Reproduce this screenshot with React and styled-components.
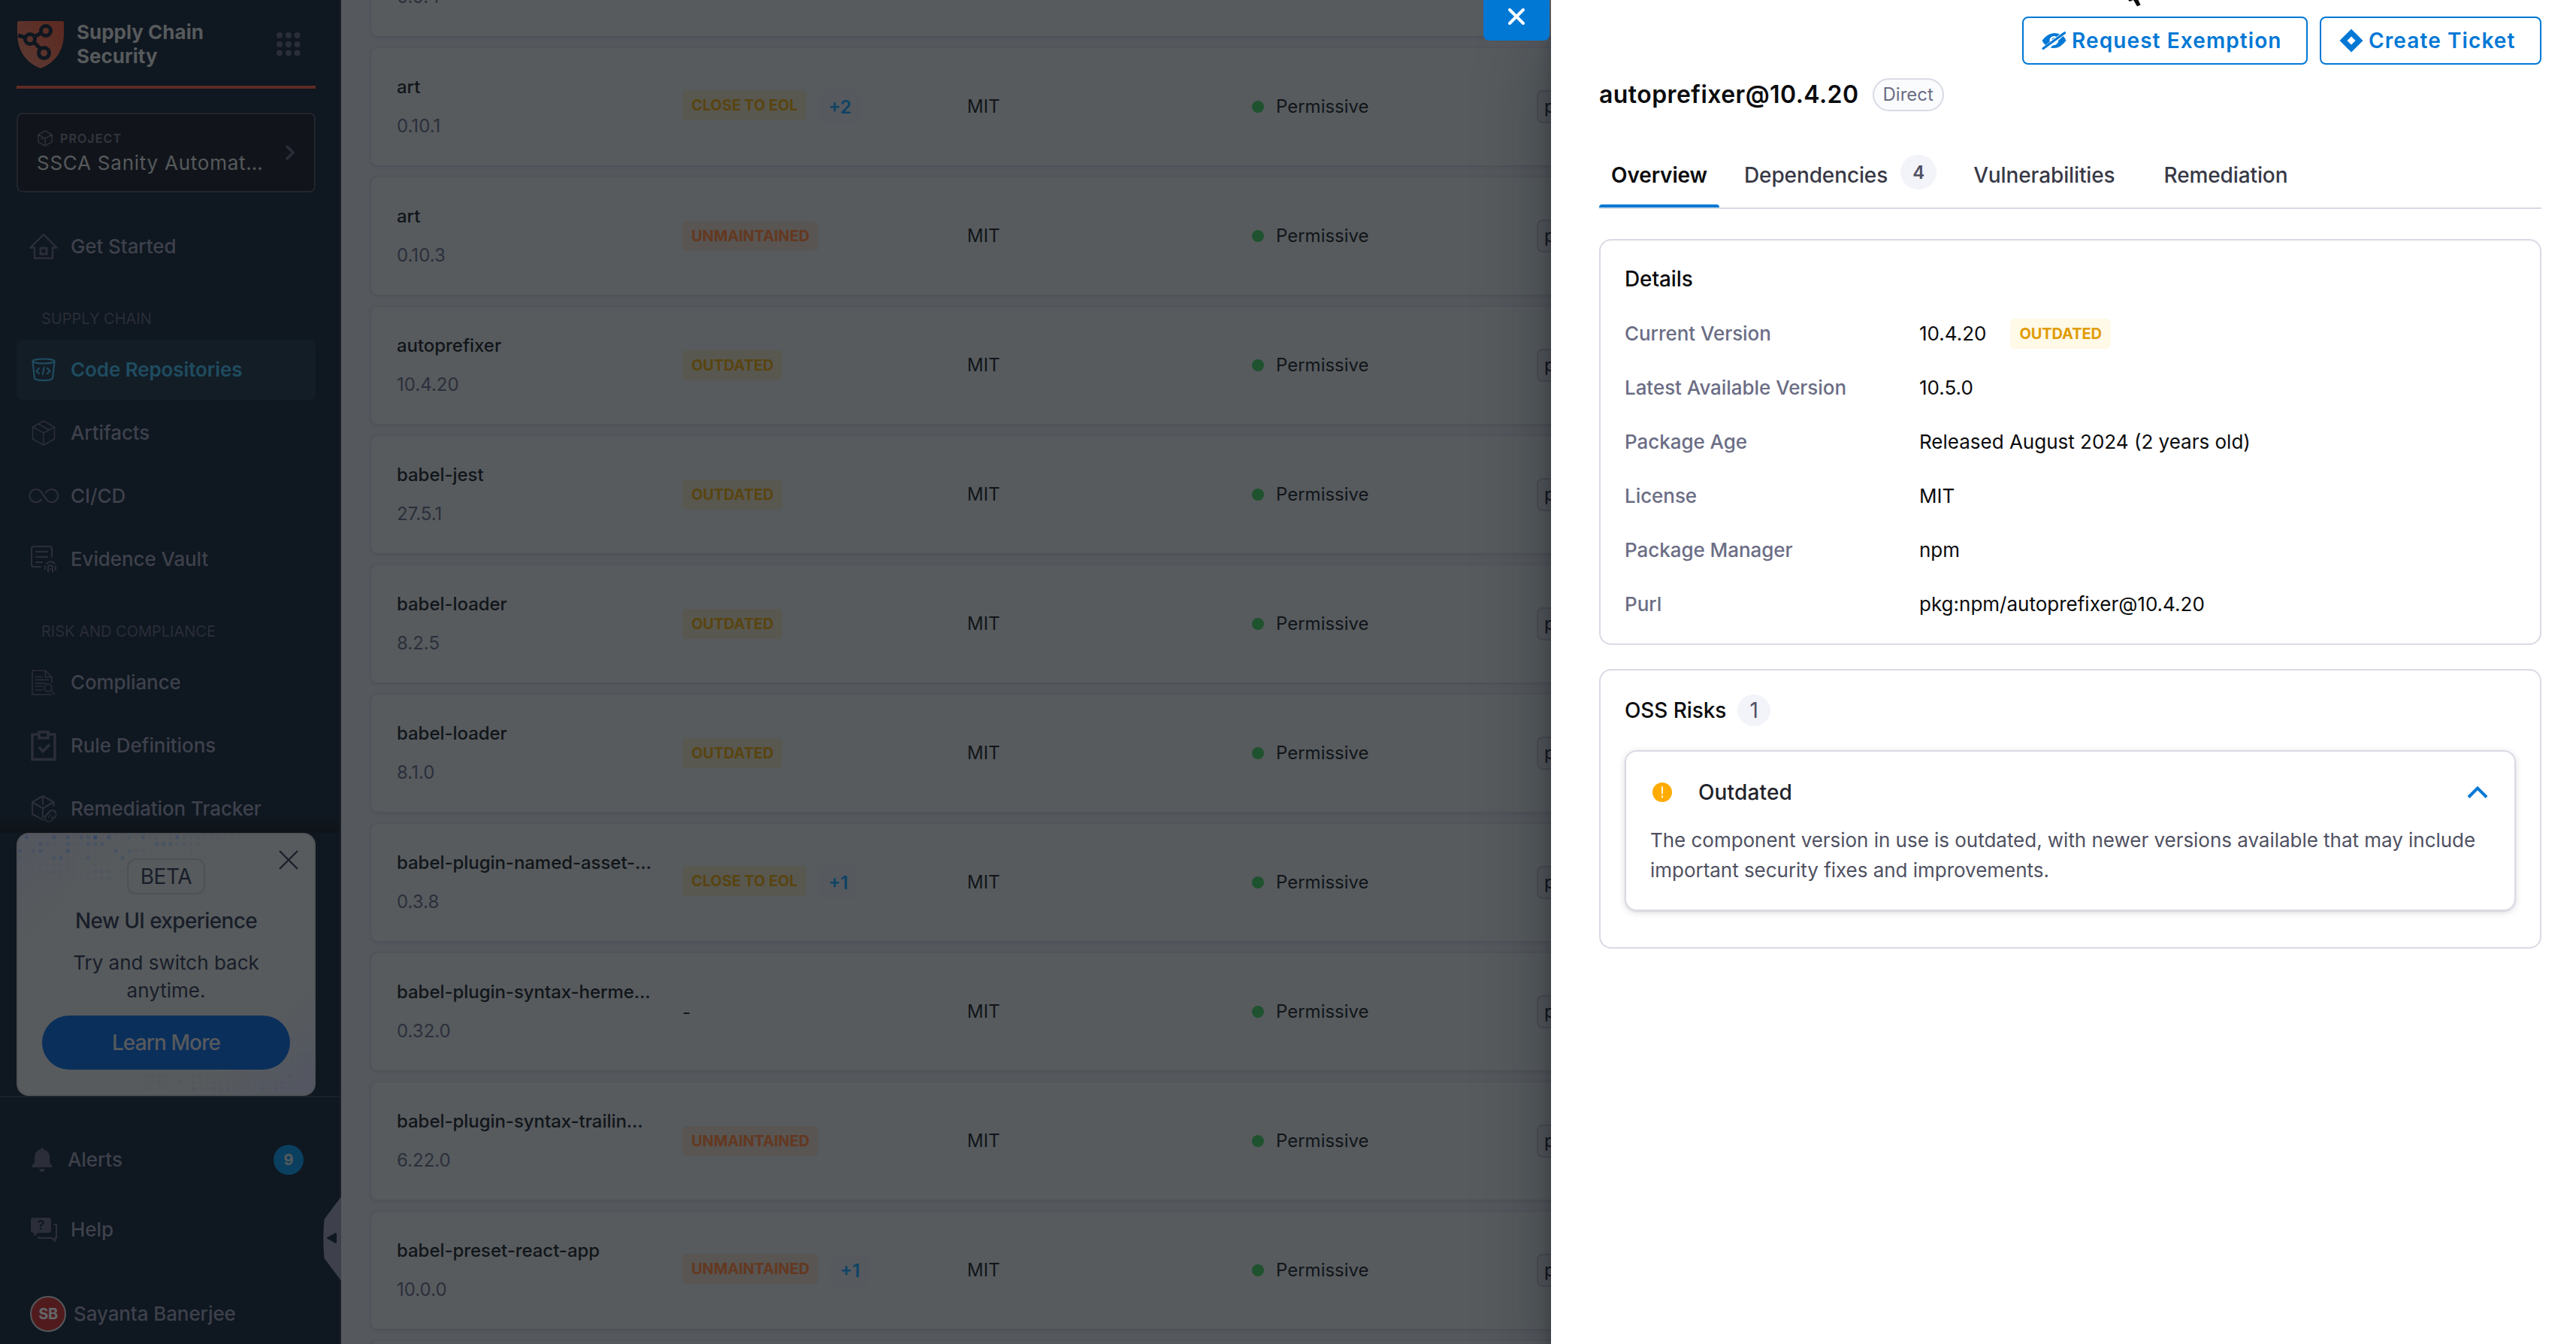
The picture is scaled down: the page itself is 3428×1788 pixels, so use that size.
import styled, { createGlobalStyle, css } from "styled-components";

const GlobalStyle = createGlobalStyle`
  * {
    box-sizing: border-box;
  }

  body {
    margin: 0;
    overflow: hidden;
    font-family: Inter, "Liberation Sans", sans-serif;
    font-size: 24px;
    background: #55585d;
  }
`;

const Page = styled.div`
  display: flex;
  position: relative;
  width: 3428px;
  height: 1788px;
  overflow: hidden;
`;

/* text sits one pixel above the middle of its row */
const Label = styled.span`
  padding-bottom: 2px;
  white-space: nowrap;
`;

/* ---------- sidebar ---------- */

const Sidebar = styled.aside`
  display: flex;
  flex-direction: column;
  position: relative;
  flex: none;
  width: 454px;
  height: 100%;
  background: #0f1720;
  border-right: 2px solid #1e2128;
`;

const SidebarTop = styled.div`
  flex: none;
  height: 1108px;
  padding: 27px 32px 0 22px;
  overflow: hidden;
  position: relative;

  &::after {
    content: "";
    position: absolute;
    left: 0;
    right: 0;
    bottom: 0;
    height: 22px;
    background: linear-gradient(rgba(15, 19, 24, 0), #0f1318);
  }
`;

const Brand = styled.header`
  display: flex;
  align-items: center;
  height: 91px;
  padding: 0 20px 23px 0;
  border-bottom: 4px solid #5f2b24;
`;

const BrandName = styled.h1`
  flex: 1;
  margin: 0 0 0 16px;
  font-size: 26px;
  font-weight: 700;
  line-height: 32px;
  color: #575a5c;
`;

const ProjectBox = styled.div`
  display: flex;
  align-items: center;
  height: 106px;
  margin-top: 32px;
  padding: 0 25px 0 25px;
  border: 2px solid #22252d;
  border-radius: 8px;
  background: #11151b;
`;

const ProjectText = styled.div`
  flex: 1;
`;

const ProjectLabel = styled.div`
  display: flex;
  align-items: center;
  gap: 9px;
  height: 28px;
  font-size: 16px;
  font-weight: 600;
  letter-spacing: 1.1px;
  color: #33363f;
`;

const ProjectName = styled.div`
  height: 38px;
  line-height: 38px;
  font-size: 26px;
  letter-spacing: 0.75px;
  white-space: nowrap;
  color: #575a5c;
`;

const Nav = styled.nav`
  display: flex;
  flex-direction: column;
  gap: 4px;
  padding-top: 32px;
`;

const NavItem = styled.a`
  display: flex;
  align-items: center;
  height: 80px;
  padding-left: 12px;
  border-radius: 8px;
  font-size: 26px;
  letter-spacing: -0.1px;
  font-weight: ${(p) => (p.$active ? 600 : 500)};
  color: ${(p) => (p.$active ? "#1f4c60" : "#3e414c")};
  background: ${(p) => (p.$active ? "#131d26" : "transparent")};
`;

const NavIcon = styled.span`
  display: flex;
  align-items: center;
  justify-content: center;
  width: ${(p) => p.$width ?? 48}px;
  margin-right: 12px;
  color: ${(p) => (p.$active ? "#1f4c60" : "#2b2e39")};
`;

const SectionLabel = styled.div`
  height: 76px;
  padding: 38px 0 0 33px;
  font-size: 20px;
  line-height: 28px;
  color: #2a2d38;
`;

const Promo = styled.section`
  position: relative;
  flex: none;
  display: flex;
  flex-direction: column;
  align-items: center;
  height: 350px;
  margin: 0 32px 0 22px;
  padding: 32px 32px 0;
  border: 2px solid #505357;
  border-radius: 16px;
  overflow: hidden;
  background: linear-gradient(135deg, #54575f 0%, #575b5d 22%, #575b5d 78%, #535662 100%);
  color: #181d29;
`;

const Pixels = styled.svg`
  position: absolute;
  inset: 0;
`;

const PromoClose = styled.span`
  position: absolute;
  top: 20px;
  right: 20px;
  display: flex;
`;

const BetaPill = styled.span`
  position: relative;
  display: flex;
  align-items: center;
  justify-content: center;
  width: 104px;
  height: 48px;
  border: 2px solid #4e5155;
  border-radius: 12px;
  background: #575b5d;
  font-size: 28px;
  letter-spacing: -0.4px;
`;

const PromoTitle = styled.h2`
  margin: 15px 0 0;
  font-size: 28px;
  font-weight: 500;
  line-height: 40px;
  letter-spacing: -0.65px;
`;

const PromoText = styled.p`
  margin: 17px 0 0;
  width: 260px;
  text-align: center;
  font-size: 26px;
  line-height: 37px;
`;

const PromoButton = styled.button`
  flex: none;
  width: 330px;
  height: 72px;
  margin-top: 15px;
  border: 0;
  border-radius: 36px;
  background: #0b2f5b;
  color: #575a5c;
  font: 500 28px Inter, sans-serif;
  letter-spacing: -0.9px;
`;

const SidebarBottom = styled.div`
  flex: 1;
  border-top: 2px solid #1b2028;
  padding: 43px 32px 0 22px;
`;

const FooterItem = styled(NavItem)`
  margin-bottom: ${(p) => p.$after ?? 0}px;
`;

const AlertCount = styled.span`
  display: flex;
  align-items: center;
  justify-content: center;
  width: 40px;
  height: 40px;
  margin: 0 16px 0 auto;
  border-radius: 50%;
  background: #0b3f60;
  color: #575a5c;
  font-size: 20px;
  font-weight: 700;
`;

const UserAvatar = styled.span`
  display: flex;
  align-items: center;
  justify-content: center;
  width: 48px;
  height: 48px;
  margin: 0 10px 0 6px;
  border: 2px solid #55585b;
  border-radius: 50%;
  background: #511b1d;
  color: #65686a;
  font-size: 20px;
  font-weight: 700;
  letter-spacing: -0.5px;
`;

const CollapseHandle = styled.svg`
  position: absolute;
  right: -2px;
  top: 1592px;
`;

/* ---------- component list ---------- */

const Content = styled.main`
  flex: 1;
  min-width: 0;
  height: 100%;
  padding-left: 40px;
  overflow: hidden;
`;

const Rows = styled.div`
  display: flex;
  flex-direction: column;
  gap: 16px;
  margin-top: -108px;
`;

const Row = styled.div`
  display: grid;
  grid-template-columns: 380px 379px 379px 379px 1fr;
  align-items: center;
  flex: none;
  height: 156px;
  padding: 0 0 0 34px;
  border-radius: 8px;
  background: #575b5e;
  box-shadow: 0 0 1px rgba(20, 22, 40, 0.08), 0 1px 5px rgba(20, 22, 40, 0.14);
  color: #111519;
`;

const NameCell = styled.div`
  display: flex;
  flex-direction: column;
  gap: 16px;
  margin-top: -1px;
  line-height: 36px;
  white-space: nowrap;
`;

const PackageName = styled.div`
  min-height: 36px;
  font-weight: 500;
  letter-spacing: -0.05px;
`;

const PackageVersion = styled.div`
  color: #2c2f3b;
`;

const RiskCell = styled.div`
  display: flex;
  align-items: flex-start;
  gap: 16px;
`;

const tones = {
  yellow: css`
    background: #585850;
    color: #594410;
  `,
  orange: css`
    background: #585553;
    color: #643820;
  `,
  bright: css`
    background: #fff9e7;
    color: #e09b03;
  `,
};

const Tag = styled.span`
  display: flex;
  align-items: center;
  height: 40px;
  padding: 0 12px;
  border-radius: 6px;
  font-size: 20px;
  font-weight: 700;
  letter-spacing: -0.1px;
  ${(p) => tones[p.$tone]}
`;

const MoreRisks = styled.span`
  display: flex;
  align-items: center;
  height: 44px;
  padding: 0 12px 0 13px;
  border-radius: 8px;
  background: #56595e;
  color: #0d4366;
  font-weight: 600;
`;

const License = styled.div`
  display: flex;
  align-items: center;
  gap: 16px;
`;

const GreenDot = styled.i`
  width: 16px;
  height: 16px;
  border-radius: 50%;
  background: #1f522e;
`;

const ManagerChip = styled.span`
  justify-self: start;
  display: flex;
  align-items: center;
  height: 44px;
  padding: 0 8px;
  border: 2px solid #4a4d55;
  border-radius: 8px;
  background: #54575c;
`;

/* ---------- drawer ---------- */

const Drawer = styled.section`
  position: absolute;
  top: 0;
  right: 0;
  width: 1364px;
  height: 100%;
  padding: 22px 46px 0 64px;
  background: #fff;
  box-shadow: 0 60px 90px rgba(10, 16, 24, 0.35), 0 40px 16px rgba(10, 16, 24, 0.25);
  color: #0b0b0d;
`;

const CloseButton = styled.button`
  position: absolute;
  top: 0;
  right: 1366px;
  display: flex;
  justify-content: center;
  width: 88px;
  height: 54px;
  padding: 10px 0 0;
  border: 0;
  border-radius: 0 0 8px 8px;
  background: #0278d5;
`;

const MousePointer = styled.svg`
  position: absolute;
  top: 0;
  left: 766px;
`;

const Actions = styled.div`
  display: flex;
  justify-content: flex-end;
  gap: 16px;
`;

const ActionButton = styled.button`
  display: flex;
  align-items: center;
  gap: 7px;
  width: ${(p) => p.$width}px;
  height: 64px;
  padding: 0 0 0 24px;
  border: 2px solid #0278d5;
  border-radius: 8px;
  background: #fff;
  color: #0278d5;
  font: 600 28px Inter, sans-serif;
  letter-spacing: 1.1px;
  white-space: nowrap;
`;

const TitleRow = styled.div`
  display: flex;
  align-items: center;
  gap: 18px;
  height: 44px;
  margin-top: 18px;
`;

const Title = styled.h2`
  margin: 0;
  padding-bottom: 2px;
  font-size: 32px;
  font-weight: 600;
  letter-spacing: 0.43px;
`;

const DirectPill = styled.span`
  display: flex;
  align-items: center;
  height: 44px;
  padding: 0 12px;
  border: 2px solid #d9dae5;
  border-radius: 22px;
  background: #fafbfc;
  color: #6b6d85;
`;

const TabList = styled.div`
  display: flex;
  height: 88px;
  margin-top: 42px;
  border-bottom: 2px solid #d9dae5;
`;

const Tab = styled.div`
  position: relative;
  display: flex;
  align-items: center;
  margin-right: ${(p) => p.$after ?? 17}px;
  padding: 0 16px;
  font-size: 28px;
  letter-spacing: -0.12px;
  font-weight: ${(p) => (p.$active ? 600 : 500)};
  color: ${(p) => (p.$active ? "#0b0b0d" : "#383946")};

  ${(p) =>
    p.$active &&
    css`
      &::after {
        content: "";
        position: absolute;
        left: 0;
        right: 0;
        bottom: 0;
        height: 4px;
        border-radius: 4px 4px 0 0;
        background: #0278d5;
      }
    `}
`;

const Count = styled.span`
  display: flex;
  align-items: center;
  justify-content: center;
  width: ${(p) => p.$width}px;
  height: ${(p) => p.$height}px;
  margin: ${(p) => p.$margin};
  border-radius: 50%;
  background: #f3f3fa;
  color: #4f5162;
  font-size: ${(p) => p.$size}px;
  font-weight: ${(p) => p.$weight};
`;

const Card = styled.div`
  margin-top: ${(p) => p.$top}px;
  padding: ${(p) => p.$padding};
  border: 2px solid #d9dae5;
  border-radius: 16px;
`;

const CardTitle = styled.h3`
  display: flex;
  align-items: center;
  height: ${(p) => p.$height}px;
  margin: 0 0 ${(p) => p.$after ?? 0}px;
  font-size: 28px;
  font-weight: 500;
  letter-spacing: -0.1px;
`;

const DetailRow = styled.div`
  display: flex;
  align-items: center;
  height: 72px;
  font-size: 26px;
`;

const DetailLabel = styled(Label)`
  width: 392px;
  font-weight: 500;
  letter-spacing: -0.05px;
  color: #6b6d85;
`;

const DetailValue = styled.div`
  display: flex;
  align-items: center;
  gap: 32px;
`;

const RiskCard = styled.div`
  padding: 32px;
  border: 2px solid #d9dae5;
  border-radius: 16px;
  box-shadow: 0 2px 8px rgba(40, 41, 61, 0.16), 0 1px 2px rgba(40, 41, 61, 0.1);
`;

const RiskHeader = styled.div`
  display: flex;
  align-items: center;
  height: 44px;
  margin-bottom: 22px;
  padding: 0 3px 0 3px;
  font-size: 28px;
  font-weight: 500;
  color: #22222a;
`;

const RiskName = styled.span`
  flex: 1;
  margin-left: 35px;
  letter-spacing: 0.15px;
`;

const RiskText = styled.p`
  margin: 0;
  font-size: 26px;
  line-height: 40px;
  letter-spacing: -0.03px;
  white-space: nowrap;
  color: #4f5162;
`;

/* ---------- icons ---------- */

const Logo = () => (
  <svg width="64" height="64" viewBox="0 0 64 64" fill="none">
    <defs>
      <linearGradient id="shield" x1="0" y1="1" x2="1" y2="0">
        <stop offset="0" stopColor="#5a3b33" />
        <stop offset="1" stopColor="#5d2820" />
      </linearGradient>
    </defs>
    <path d="M3 1H61Q63 1 63 3V17C63 42 50 57 32 64C14 57 1 42 1 17V3Q1 1 3 1Z" fill="url(#shield)" />
    <g stroke="#0f1720" strokeWidth="5">
      <path d="M2 20L12 23M25 21L32 17.500M24 30L32 38" />
      <circle cx="18" cy="25" r="6.500" />
      <circle cx="39" cy="14" r="6.500" />
      <circle cx="36.500" cy="43.500" r="7" />
    </g>
  </svg>
);

const GridIcon = () => (
  <svg width="32" height="32" viewBox="0 0 32 32" fill="#2b2e39">
    {[4, 16, 27.5].map((y) => [4, 16, 27.5].map((x) => <circle key={`${x}-${y}`} cx={x} cy={y} r="4" />))}
  </svg>
);

const ChevronRight = () => (
  <svg width="14" height="22" viewBox="0 0 14 22" fill="none" stroke="#2b2e39" strokeWidth="3.500" strokeLinecap="round" strokeLinejoin="round">
    <path d="M3 3L11 11L3 19" />
  </svg>
);

const CubeSmall = () => (
  <svg width="22" height="22" viewBox="0 0 22 22" fill="none" stroke="#33363f" strokeWidth="1.300" strokeLinejoin="round">
    <path d="M11 1L20 6V16L11 21L2 16V6ZM2 6L11 11L20 6M11 11V21M5 10.500L8.500 12.500" />
  </svg>
);

const HomeIcon = () => (
  <svg width="40" height="36" viewBox="0 0 40 36" fill="none" stroke="currentColor" strokeWidth="2.400" strokeLinejoin="round">
    <path d="M20 2L37.500 19.500H32V33.500H8V19.500H2.500Z" />
    <rect x="16" y="20" width="8" height="8" strokeWidth="3" />
  </svg>
);

const RepoIcon = () => (
  <svg width="34" height="32" viewBox="0 0 34 32" fill="none" stroke="currentColor" strokeWidth="2.200" strokeLinecap="round" strokeLinejoin="round">
    <ellipse cx="17" cy="4.500" rx="14.500" ry="3" />
    <path d="M2.500 5L5 27.500C8 31 26 31 29 27.500L31.500 5" />
    <path d="M11 14L7.500 17.500L11 21M22 14L25.500 17.500L22 21M17.700 13L15.700 22" />
  </svg>
);

const ArtifactIcon = () => (
  <svg width="32" height="34" viewBox="0 0 32 34" fill="none" stroke="currentColor" strokeWidth="1.500" strokeLinejoin="round">
    <path d="M16 1L30.500 9V25L16 33L1.500 25V9ZM1.500 9L16 17L30.500 9M16 17V33M9 5L23.500 13" />
  </svg>
);

const InfinityIcon = () => (
  <svg width="40" height="20" viewBox="0 0 40 20" fill="none" stroke="currentColor" strokeWidth="2.200" strokeLinecap="round">
    <path d="M17 14.500A8.600 8.600 0 1 1 16.500 4L25 16A8.600 8.600 0 1 0 23 5.500" />
  </svg>
);

const EvidenceIcon = () => (
  <svg width="36" height="38" viewBox="0 0 36 38" fill="none" stroke="currentColor" strokeWidth="2.200" strokeLinecap="round">
    <path d="M14 29H5Q2 29 2 26V5Q2 2 5 2H26Q29 2 29 5V16M8 9H23M8 16H23M8 23H16" />
    <path d="M20 28V32M22.500 24.500Q28 19.500 33 25M34 28.500V33M24 36V30Q24 27 27 27Q30 27 30 30V36M27 32V32.500" />
  </svg>
);

const ComplianceIcon = () => (
  <svg width="32" height="34" viewBox="0 0 32 34" fill="none" stroke="currentColor" strokeWidth="1.500">
    <path d="M27 33H1V1H18.500L27 10V18M18.500 1V10H27M5 9.500H15M5 13.500H23M5 18H19M5 22H15M5 27H15" />
    <circle cx="22" cy="24" r="5" />
    <path d="M26 28L31 33" />
  </svg>
);

const RuleIcon = () => (
  <svg width="34" height="40" viewBox="0 0 34 40" fill="none" stroke="currentColor" strokeWidth="3.500">
    <path d="M11 5H2V38.200H32V5H23" />
    <rect x="11" y="1.800" width="12" height="8" />
    <path d="M11 22L16 27.500L25 18.500" />
  </svg>
);

const RemediationIcon = () => (
  <svg width="34" height="38" viewBox="0 0 34 38" fill="none" stroke="currentColor" strokeWidth="2.200" strokeLinecap="round" strokeLinejoin="round">
    <path d="M17 34L2 26V10L16 2L30.500 10V15M2 10L16 18.500L30 10M16 2V13M16 18.500V30" />
    <rect x="18" y="24" width="17" height="10" rx="5" transform="rotate(-45 26 29)" />
    <path d="M25.300 27.500V27.600M28 30.200V30.300M23.800 30.200V30.300" />
  </svg>
);

const BellIcon = () => (
  <svg width="28" height="32" viewBox="0 0 28 32" fill="#2b2e39">
    <path d="M14 0Q15.500 0 16 2Q24 4 24 13V19Q24 21 27 23Q28.500 26 26 26H2Q-0.500 26 1 23Q4 21 4 19V13Q4 4 12 2Q12.500 0 14 0ZM10 28H18Q17 32 14 32Q11 32 10 28Z" />
  </svg>
);

const HelpBubbleIcon = () => (
  <svg width="38" height="34" viewBox="0 0 38 34" fill="none">
    <path d="M4 1H26Q29 1 29 4V18Q29 21 26 21H12L6 26V21Q2 21 2 18V4Q2 1 4 1Z" fill="#2b2e39" />
    <text x="15.500" y="17" textAnchor="middle" fontSize="17" fontWeight="700" fill="#0f1720">
      ?
    </text>
    <path d="M32 10H36V28H34V31.500L30 28H15Q12 28 12 26" stroke="#2b2e39" strokeWidth="2.200" />
  </svg>
);

const EyeOffIcon = () => (
  <svg width="33" height="24" viewBox="0 0 33 24" fill="#0278d5">
    <path d="M0.500 12Q8 2 17 2Q21 2 24 3.500L19.500 7A5.800 5.800 0 0 0 10.800 13.500L5 18Q2 15.500 0.500 12Z" />
    <path d="M13.500 10.500Q14 7.500 17.500 8L13.500 11Z" />
    <path d="M28.500 6Q31 8.500 32.500 12Q25 22 16 22Q13 22 11.500 21.300L15 18.200Q19 18.300 21 15.500Q22.300 13.500 22 12Z" />
    <path d="M2 22.500L30.500 1.800" stroke="#0278d5" strokeWidth="3.200" strokeLinecap="round" />
  </svg>
);

const DiamondIcon = () => (
  <svg width="32" height="32" viewBox="0 0 32 32" fill="#0278d5" fillRule="evenodd">
    <path d="M16 0.500L31.500 16L16 31.500L0.500 16ZM16 10.500L10.500 16L16 21.500L21.500 16Z" />
  </svg>
);

const AlertIcon = () => (
  <svg width="26" height="26" viewBox="0 0 26 26">
    <circle cx="13" cy="13" r="13" fill="#ffab00" />
    <path d="M13 6V14.500M13 18V19.500" stroke="#fff" strokeWidth="1.800" strokeLinecap="round" />
  </svg>
);

/* Faded pixel texture of the promo card: one digit per cell, 0 is empty. */
const topPixels = [
  "16112616255826124252312633322212111010",
  "11153115125551111111555332211111",
  "5145111611111151423111111211111",
  "31111451114111151111111110010",
  "2212112221121111",
  "1111133111133312",
  "11110010212223111",
  "000000010010011",
];

const bottomPixels = [
  { x: 371, y: 291, cells: "111" },
  { x: 362, y: 300, cells: "1211" },
  { x: 335, y: 309, cells: "01211222" },
  { x: 131, y: 318, cells: "01022222111331111111111113" },
  { x: 131, y: 327, cells: "11111131131221221111121331" },
  { x: 131, y: 336, cells: "11113221111422455531151331" },
];

const PIXEL_STEP = 9.11;

const PixelTexture = () => (
  <Pixels width="394" height="346">
    {topPixels.map((line, j) =>
      [...line].map((v, i) => (
        <rect
          key={`${i}-${j}`}
          x={i * PIXEL_STEP}
          y={1.5 + j * PIXEL_STEP}
          width="4.800"
          height="4.800"
          fill="#33486c"
          opacity={v * v * 0.012 + v * 0.022}
        />
      ))
    )}
    {bottomPixels.map(({ x, y, cells }) =>
      [...cells].map((v, i) => (
        <rect key={`${i}-${y}`} x={x + i * PIXEL_STEP} y={y} width="4.800" height="4.800" fill="#424b68" opacity={v * 0.05} />
      ))
    )}
  </Pixels>
);

/* ---------- data ---------- */

const supplyChain = [
  { label: "Code Repositories", Icon: RepoIcon, active: true },
  { label: "Artifacts", Icon: ArtifactIcon },
  { label: "CI/CD", Icon: InfinityIcon },
  { label: "Evidence Vault", Icon: EvidenceIcon },
];

const compliance = [
  { label: "Compliance", Icon: ComplianceIcon },
  { label: "Rule Definitions", Icon: RuleIcon },
  { label: "Remediation Tracker", Icon: RemediationIcon },
];

const packages = [
  { name: "art", version: "0.10.1", risk: "CLOSE TO EOL", more: "+2" },
  { name: "art", version: "0.10.3", risk: "UNMAINTAINED" },
  { name: "autoprefixer", version: "10.4.20", risk: "OUTDATED" },
  { name: "babel-jest", version: "27.5.1", risk: "OUTDATED" },
  { name: "babel-loader", version: "8.2.5", risk: "OUTDATED" },
  { name: "babel-loader", version: "8.1.0", risk: "OUTDATED" },
  { name: "babel-plugin-named-asset-…", version: "0.3.8", risk: "CLOSE TO EOL", more: "+1" },
  { name: "babel-plugin-syntax-herme…", version: "0.32.0" },
  { name: "babel-plugin-syntax-trailin…", version: "6.22.0", risk: "UNMAINTAINED" },
  { name: "babel-preset-react-app", version: "10.0.0", risk: "UNMAINTAINED", more: "+1" },
];

const details = [
  ["Current Version", "10.4.20", "OUTDATED"],
  ["Latest Available Version", "10.5.0"],
  ["Package Age", "Released August 2024 (2 years old)"],
  ["License", "MIT"],
  ["Package Manager", "npm"],
  ["Purl", "pkg:npm/autoprefixer@10.4.20"],
];

const NavLink = ({ label, Icon, active }) => (
  <NavItem $active={active}>
    <NavIcon $active={active}>
      <Icon />
    </NavIcon>
    <Label>{label}</Label>
  </NavItem>
);

const PackageRow = ({ name, version, risk, more }) => (
  <Row>
    <NameCell>
      <PackageName>{name}</PackageName>
      <PackageVersion>{version}</PackageVersion>
    </NameCell>
    <RiskCell>
      {risk ? <Tag $tone={risk === "UNMAINTAINED" ? "orange" : "yellow"}>{risk}</Tag> : "-"}
      {more && <MoreRisks>{more}</MoreRisks>}
    </RiskCell>
    <Label>MIT</Label>
    <License>
      <GreenDot />
      <Label>Permissive</Label>
    </License>
    <ManagerChip>
      <Label>p</Label>
    </ManagerChip>
  </Row>
);

function App() {
  return (
    <Page>
      <GlobalStyle />

      <Sidebar>
        <SidebarTop>
          <Brand>
            <Logo />
            <BrandName>
              Supply Chain
              <br />
              Security
            </BrandName>
            <GridIcon />
          </Brand>
          <ProjectBox>
            <ProjectText>
              <ProjectLabel>
                <CubeSmall />
                PROJECT
              </ProjectLabel>
              <ProjectName>SSCA Sanity Automat…</ProjectName>
            </ProjectText>
            <ChevronRight />
          </ProjectBox>
          <Nav>
            <NavLink label="Get Started" Icon={HomeIcon} />
            <SectionLabel>SUPPLY CHAIN</SectionLabel>
            {supplyChain.map((item) => (
              <NavLink key={item.label} {...item} />
            ))}
            <SectionLabel>RISK AND COMPLIANCE</SectionLabel>
            {compliance.map((item) => (
              <NavLink key={item.label} {...item} />
            ))}
          </Nav>
        </SidebarTop>

        <Promo>
          <PixelTexture />
          <PromoClose>
            <svg width="28" height="28" viewBox="0 0 28 28" stroke="#181d29" strokeWidth="2.200">
              <path d="M2 2L26 26M26 2L2 26" />
            </svg>
          </PromoClose>
          <BetaPill>BETA</BetaPill>
          <PromoTitle>New UI experience</PromoTitle>
          <PromoText>Try and switch back anytime.</PromoText>
          <PromoButton>Learn More</PromoButton>
        </Promo>

        <SidebarBottom>
          <FooterItem $after={13}>
            <NavIcon $width={44}>
              <BellIcon />
            </NavIcon>
            <Label>Alerts</Label>
            <AlertCount>9</AlertCount>
          </FooterItem>
          <FooterItem $after={32}>
            <NavIcon>
              <HelpBubbleIcon />
            </NavIcon>
            <Label>Help</Label>
          </FooterItem>
          <FooterItem>
            <UserAvatar>SB</UserAvatar>
            <Label>Sayanta Banerjee</Label>
          </FooterItem>
        </SidebarBottom>

        <CollapseHandle width="24" height="112" viewBox="0 0 24 112">
          <path d="M24 0V112L1.500 82Q-1 56 1.500 30Z" fill="#3e414c" />
          <path d="M4 55L16.500 48Q18 48 18 50V60Q18 62 16.500 62Z" fill="#0f1720" />
        </CollapseHandle>
      </Sidebar>

      <Content>
        <Rows>
          <Row>
            <NameCell>
              <PackageName />
              <PackageVersion>0.0.4</PackageVersion>
            </NameCell>
          </Row>
          {packages.map((item) => (
            <PackageRow key={item.name + item.version} {...item} />
          ))}
          <Row />
        </Rows>
      </Content>

      <Drawer>
        <CloseButton>
          <svg width="24" height="24" viewBox="0 0 24 24" stroke="#fff" strokeWidth="4" strokeLinecap="round">
            <path d="M3 3L21 21M21 3L3 21" />
          </svg>
        </CloseButton>
        <MousePointer width="30" height="18" viewBox="0 0 30 18">
          <path d="M2 0L4 2L9 0L14 8.500L18.500 6.500L15.500 0Z" fill="#0b0b0d" />
        </MousePointer>
        <Actions>
          <ActionButton $width={380}>
            <EyeOffIcon />
            Request Exemption
          </ActionButton>
          <ActionButton $width={295}>
            <DiamondIcon />
            Create Ticket
          </ActionButton>
        </Actions>
        <TitleRow>
          <Title>autoprefixer@10.4.20</Title>
          <DirectPill>
            <Label>Direct</Label>
          </DirectPill>
        </TitleRow>
        <TabList>
          <Tab $active>Overview</Tab>
          <Tab>
            Dependencies
            <Count $width={48} $height={46} $size={24} $weight={600} $margin="-8px 0 0 17px">
              4
            </Count>
          </Tab>
          <Tab $after={33}>Vulnerabilities</Tab>
          <Tab>Remediation</Tab>
        </TabList>

        <Card $top={40} $padding="16px 32px">
          <CardTitle $height={72}>
            <Label>Details</Label>
          </CardTitle>
          {details.map(([label, value, tag]) => (
            <DetailRow key={label}>
              <DetailLabel>{label}</DetailLabel>
              <DetailValue>
                <Label>{value}</Label>
                {tag && <Tag $tone="bright">{tag}</Tag>}
              </DetailValue>
            </DetailRow>
          ))}
        </Card>

        <Card $top={32} $padding="32px 32px 48px">
          <CardTitle $height={42} $after={32}>
            OSS Risks
            <Count $width={44} $height={42} $size={28} $weight={400} $margin="0 0 0 15px">
              1
            </Count>
          </CardTitle>
          <RiskCard>
            <RiskHeader>
              <AlertIcon />
              <RiskName>Outdated</RiskName>
              <svg width="28" height="18" viewBox="0 0 28 18" fill="none" stroke="#0278d5" strokeWidth="4">
                <path d="M2 15.500L14 3.500L26 15.500" />
              </svg>
            </RiskHeader>
            <RiskText>
              The component version in use is outdated, with newer versions available that may include
              <br />
              important security fixes and improvements.
            </RiskText>
          </RiskCard>
        </Card>
      </Drawer>
    </Page>
  );
}

export default App;
